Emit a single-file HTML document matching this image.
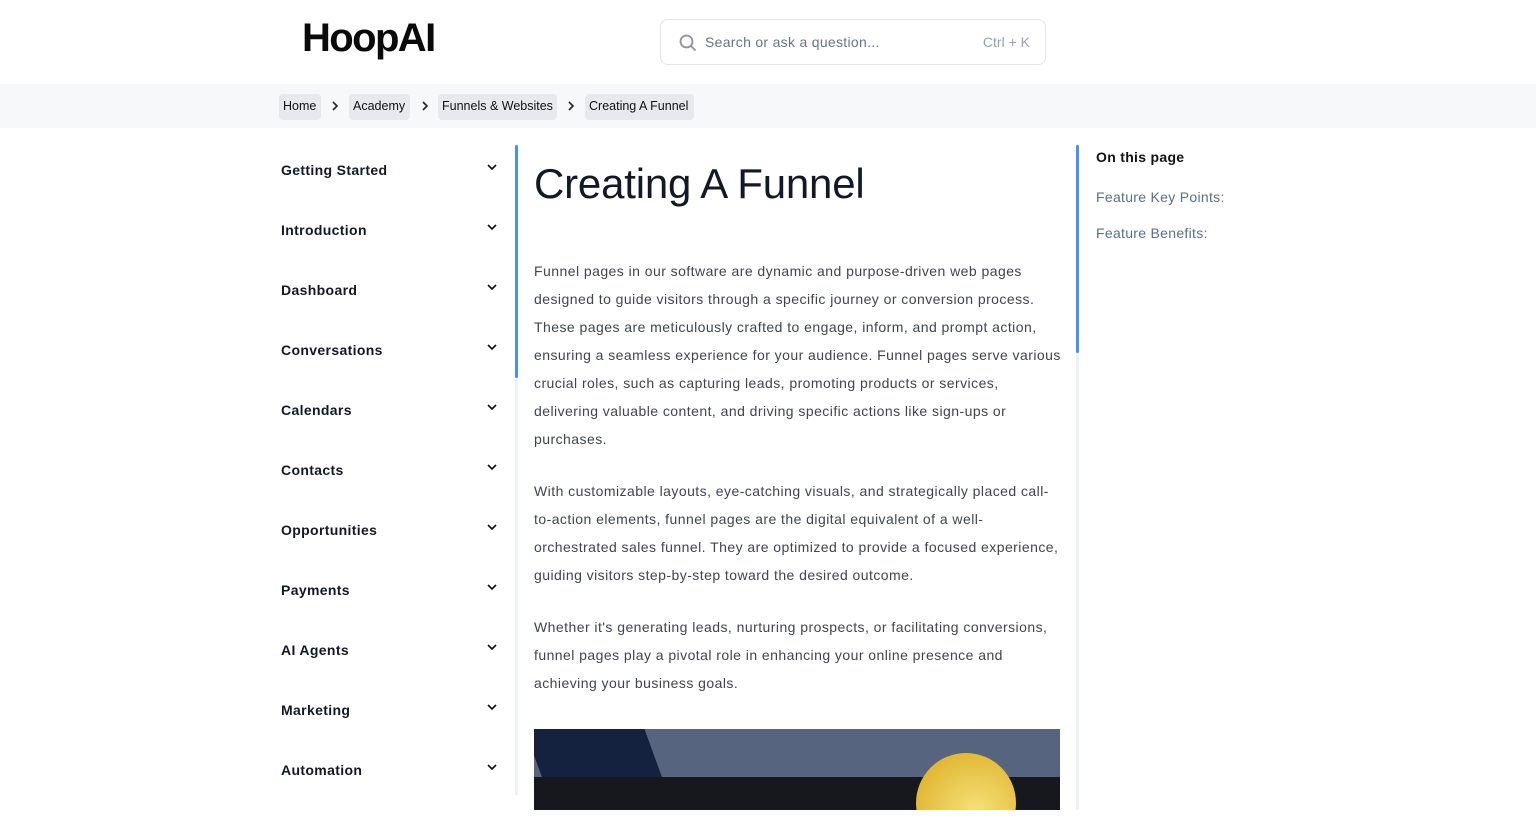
<!DOCTYPE html>
<html><head><style>
*{margin:0;padding:0;box-sizing:border-box}
body{width:1536px;height:826px;overflow:hidden;background:#fff;font-family:"Liberation Sans",sans-serif;position:relative}
.hdr{position:absolute;left:0;top:0;width:1536px;height:84px;background:#fff;box-shadow:0 1px 3px rgba(0,0,0,.06)}
.logo{position:absolute;left:302px;top:16px;font-size:40px;font-weight:bold;color:#0a0a0a;letter-spacing:-1.6px}
.search{position:absolute;left:660px;top:19px;width:386px;height:46px;border:1px solid #e2e6ee;border-radius:8px}
.search span{position:absolute;top:14px;font-size:14px;color:#64748b}
.bc{position:absolute;left:0;top:84px;width:1536px;height:44px;background:#f7f8fa}
.chip{position:absolute;top:94px;height:26px;line-height:24px;background:#e8e9ec;border-radius:4px;font-size:12.5px;color:#111;padding:0 4px}
.sep{position:absolute;top:101px}
.nav{position:absolute;left:281px;font-size:14px;font-weight:bold;color:#111827;letter-spacing:.35px}
.p{position:absolute;left:534px;width:528px;font-size:14px;line-height:28px;color:#3f4550;letter-spacing:.45px}
</style></head><body>
<div class="hdr"><div class="logo">HoopAI</div>
<div class="search"><svg style="position:absolute;left:18px;top:14px" width="18" height="18" viewBox="0 0 18 18" fill="none" stroke="#8a94a6" stroke-width="1.8"><circle cx="7.5" cy="7.5" r="6"/><path d="M12 12l4.5 4.5"/></svg><span style="left:44px;letter-spacing:.3px">Search or ask a question...</span><span style="right:15px;color:#94a3b8">Ctrl + K</span></div></div>
<div class="bc"></div>
<div class="chip" style="left:279px;width:42px">Home</div>
<div class="chip" style="left:349px;width:61px">Academy</div>
<div class="chip" style="left:438px;width:119px">Funnels &amp; Websites</div>
<div class="chip" style="left:585px;width:109px">Creating A Funnel</div>
<svg class="sep" style="left:331px" width="8" height="10" fill="none" stroke="#222" stroke-width="1.6"><path d="M2 1l4 4-4 4"/></svg>
<svg class="sep" style="left:421px" width="8" height="10" fill="none" stroke="#222" stroke-width="1.6"><path d="M2 1l4 4-4 4"/></svg>
<svg class="sep" style="left:567px" width="8" height="10" fill="none" stroke="#222" stroke-width="1.6"><path d="M2 1l4 4-4 4"/></svg>

<div class="nav" style="top:162px">Getting Started</div>
<div class="nav" style="top:222px">Introduction</div>
<div class="nav" style="top:282px">Dashboard</div>
<div class="nav" style="top:342px">Conversations</div>
<div class="nav" style="top:402px">Calendars</div>
<div class="nav" style="top:462px">Contacts</div>
<div class="nav" style="top:522px">Opportunities</div>
<div class="nav" style="top:582px">Payments</div>
<div class="nav" style="top:642px">AI Agents</div>
<div class="nav" style="top:702px">Marketing</div>
<div class="nav" style="top:762px">Automation</div>
<svg style="position:absolute;left:486px;top:160px" width="12" height="620" fill="none" stroke="#111" stroke-width="1.6">
<g id="c"><path d="M2 5l4 4 4-4"/></g>
<use href="#c" y="60"/><use href="#c" y="120"/><use href="#c" y="180"/><use href="#c" y="240"/><use href="#c" y="300"/><use href="#c" y="360"/><use href="#c" y="420"/><use href="#c" y="480"/><use href="#c" y="540"/><use href="#c" y="600"/></svg>
<div style="position:absolute;left:515px;top:145px;width:3px;height:650px;background:#eef1f6"></div>
<div style="position:absolute;left:515px;top:145px;width:3px;height:233px;background:#4b8ef5;border-radius:2px"></div>

<div style="position:absolute;left:534px;top:160px;font-size:42px;color:#111827;letter-spacing:-.2px">Creating A Funnel</div>
<div class="p" style="top:257px">Funnel pages in our software are dynamic and purpose-driven web pages designed to guide visitors through a specific journey or conversion process. These pages are meticulously crafted to engage, inform, and prompt action, ensuring a seamless experience for your audience. Funnel pages serve various crucial roles, such as capturing leads, promoting products or services, delivering valuable content, and driving specific actions like sign-ups or purchases.</div>
<div class="p" style="top:477px">With customizable layouts, eye-catching visuals, and strategically placed call-to-action elements, funnel pages are the digital equivalent of a well-orchestrated sales funnel. They are optimized to provide a focused experience, guiding visitors step-by-step toward the desired outcome.</div>
<div class="p" style="top:613px">Whether it's generating leads, nurturing prospects, or facilitating conversions, funnel pages play a pivotal role in enhancing your online presence and achieving your business goals.</div>
<div style="position:absolute;left:534px;top:729px;width:526px;height:81px;background:#56647f;overflow:hidden">
<div style="position:absolute;left:5px;top:0;width:120px;height:80px;background:#14213f;transform:skewX(20deg)"></div>
<div style="position:absolute;left:0;top:48px;width:526px;height:33px;background:#16181d"></div>
<div style="position:absolute;left:382px;top:24px;width:100px;height:100px;border-radius:50%;background:radial-gradient(circle at 60% 60%,#f6e27a,#d9a91c)"></div></div>

<div style="position:absolute;left:1076px;top:145px;width:3px;height:665px;background:#eef1f6"></div>
<div style="position:absolute;left:1076px;top:145px;width:3px;height:208px;background:#4b8ef5;border-radius:2px"></div>
<div style="position:absolute;left:1096px;top:149px;font-size:14px;font-weight:bold;color:#111;letter-spacing:.3px">On this page</div>
<div style="position:absolute;left:1096px;top:189px;font-size:14px;color:#5a6f8a;letter-spacing:.3px">Feature Key Points:</div>
<div style="position:absolute;left:1096px;top:225px;font-size:14px;color:#5a6f8a;letter-spacing:.3px">Feature Benefits:</div>
</body></html>
